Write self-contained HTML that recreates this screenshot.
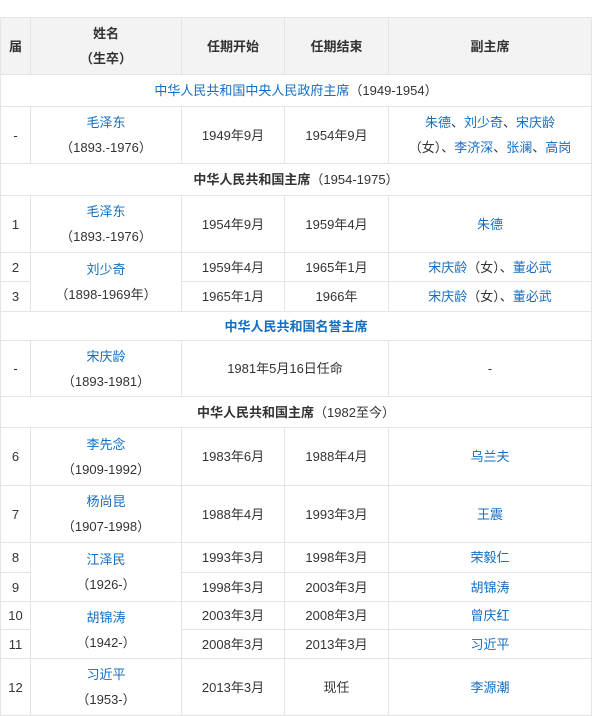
<!DOCTYPE html>
<html><head><meta charset="utf-8"><style>
body{margin:0;background:#fff;width:600px;height:716px;overflow:hidden;font-family:"Liberation Sans","Noto Sans CJK SC",sans-serif;font-size:13px;color:#333}
table{position:absolute;left:0;top:17px;border-collapse:collapse;width:591px;table-layout:fixed}
td,th{border:1px solid #e4e4e4;text-align:center;padding:0;line-height:25px}
th{background:#f3f3f3;font-weight:bold;color:#333}
a{color:#136ec2;text-decoration:none}
.s{font-weight:bold}
</style></head><body>
<table>
<colgroup><col style="width:30px"><col style="width:151px"><col style="width:103px"><col style="width:104px"><col style="width:203px"></colgroup>
<tr style="height:57px"><th>届</th><th>姓名<br>（生卒）</th><th>任期开始</th><th>任期结束</th><th>副主席</th></tr>
<tr style="height:32px"><td colspan="5"><a>中华人民共和国中央人民政府主席</a>（1949-1954）</td></tr>
<tr style="height:57px"><td>-</td><td><a>毛泽东</a><br>（1893.-1976）</td><td>1949年9月</td><td>1954年9月</td><td><a>朱德</a>、<a>刘少奇</a>、<a>宋庆龄</a><br>（女）、<a>李济深</a>、<a>张澜</a>、<a>高岗</a></td></tr>
<tr style="height:32px"><td colspan="5"><span class="s">中华人民共和国主席</span>（1954-1975）</td></tr>
<tr style="height:57px"><td>1</td><td><a>毛泽东</a><br>（1893.-1976）</td><td>1954年9月</td><td>1959年4月</td><td><a>朱德</a></td></tr>
<tr style="height:29px"><td>2</td><td rowspan="2"><a>刘少奇</a><br>（1898-1969年）</td><td>1959年4月</td><td>1965年1月</td><td><a>宋庆龄</a>（女）、<a>董必武</a></td></tr>
<tr style="height:30px"><td>3</td><td>1965年1月</td><td>1966年</td><td><a>宋庆龄</a>（女）、<a>董必武</a></td></tr>
<tr style="height:29px"><td colspan="5"><a class="s">中华人民共和国名誉主席</a></td></tr>
<tr style="height:56px"><td>-</td><td><a>宋庆龄</a><br>（1893-1981）</td><td colspan="2">1981年5月16日任命</td><td>-</td></tr>
<tr style="height:31px"><td colspan="5"><span class="s">中华人民共和国主席</span>（1982至今）</td></tr>
<tr style="height:58px"><td>6</td><td><a>李先念</a><br>（1909-1992）</td><td>1983年6月</td><td>1988年4月</td><td><a>乌兰夫</a></td></tr>
<tr style="height:57px"><td>7</td><td><a>杨尚昆</a><br>（1907-1998）</td><td>1988年4月</td><td>1993年3月</td><td><a>王震</a></td></tr>
<tr style="height:30px"><td>8</td><td rowspan="2"><a>江泽民</a><br>（1926-）</td><td>1993年3月</td><td>1998年3月</td><td><a>荣毅仁</a></td></tr>
<tr style="height:29px"><td>9</td><td>1998年3月</td><td>2003年3月</td><td><a>胡锦涛</a></td></tr>
<tr style="height:28px"><td>10</td><td rowspan="2"><a>胡锦涛</a><br>（1942-）</td><td>2003年3月</td><td>2008年3月</td><td><a>曾庆红</a></td></tr>
<tr style="height:29px"><td>11</td><td>2008年3月</td><td>2013年3月</td><td><a>习近平</a></td></tr>
<tr style="height:57px"><td>12</td><td><a>习近平</a><br>（1953-）</td><td>2013年3月</td><td>现任</td><td><a>李源潮</a></td></tr>
</table>
</body></html>
